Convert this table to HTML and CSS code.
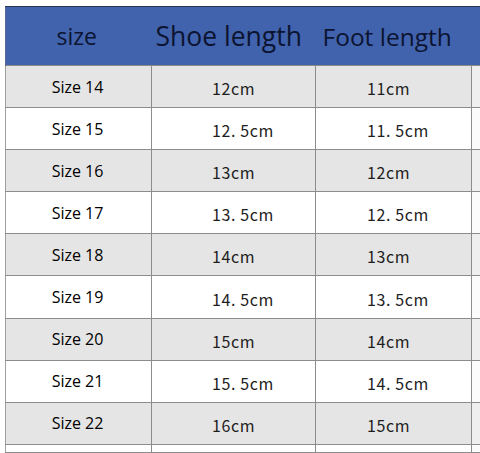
FILE: index.html
```html
<!DOCTYPE html>
<html>
<head>
<meta charset="utf-8">
<link rel="stylesheet" href="styles.css">
</head>
<body>
<div class="wrap">
<table class="chart">
  <colgroup>
    <col class="c1"><col class="c2"><col class="c3"><col class="c4">
  </colgroup>
  <thead>
    <tr class="head">
      <th class="h-size">size</th>
      <th class="h-shoe">Shoe length</th>
      <th class="h-foot">Foot length</th>
      <th class="h-extra"></th>
    </tr>
  </thead>
  <tbody>
    <tr class="gray"><td class="sz">Size 14</td><td class="cm cm2">12cm</td><td class="cm cm3">11cm</td><td class="ex"></td></tr>
    <tr class="white"><td class="sz">Size 15</td><td class="cm cm2">12. 5cm</td><td class="cm cm3">11. 5cm</td><td class="ex"></td></tr>
    <tr class="gray"><td class="sz">Size 16</td><td class="cm cm2">13cm</td><td class="cm cm3">12cm</td><td class="ex"></td></tr>
    <tr class="white"><td class="sz">Size 17</td><td class="cm cm2">13. 5cm</td><td class="cm cm3">12. 5cm</td><td class="ex"></td></tr>
    <tr class="gray"><td class="sz">Size 18</td><td class="cm cm2">14cm</td><td class="cm cm3">13cm</td><td class="ex"></td></tr>
    <tr class="white"><td class="sz">Size 19</td><td class="cm cm2">14. 5cm</td><td class="cm cm3">13. 5cm</td><td class="ex"></td></tr>
    <tr class="gray"><td class="sz">Size 20</td><td class="cm cm2">15cm</td><td class="cm cm3">14cm</td><td class="ex"></td></tr>
    <tr class="white"><td class="sz">Size 21</td><td class="cm cm2">15. 5cm</td><td class="cm cm3">14. 5cm</td><td class="ex"></td></tr>
    <tr class="gray"><td class="sz">Size 22</td><td class="cm cm2">16cm</td><td class="cm cm3">15cm</td><td class="ex"></td></tr>
    <tr class="white last"><td class="sz"></td><td class="cm cm2"></td><td class="cm cm3"></td><td class="ex"></td></tr>
  </tbody>
</table>
</div>
</body>
</html>
```

FILE: styles.css
```css
html, body {
  margin: 0;
  padding: 0;
  background: #ffffff;
}

.wrap {
  box-sizing: border-box;
  padding: 6px 0 0 5px;
  width: 480px;
  height: 453px;
  overflow: hidden;
}

.chart {
  border-collapse: collapse;
  table-layout: fixed;
  width: 486px;
  font-family: "Open Sans", "Noto Sans", sans-serif;
  color: #000000;
}

.c1 { width: 146px; }
.c2 { width: 164px; }
.c3 { width: 156px; }
.c4 { width: 20px; }

.head {
  background: #4163ad;
  height: 59px;
}

.head th {
  font-weight: 400;
  color: #0c1431;
  border-top: 1px solid #2a3450;
  padding: 0;
  vertical-align: middle;
  white-space: nowrap;
}

.head th:first-child {
  border-left: 1px solid #5a6a90;
}

.h-size {
  font-size: 23px;
  text-align: center;
  padding-right: 4px !important;
}

.h-shoe {
  font-size: 26.5px;
  text-align: left;
  padding-left: 4px !important;
}

.h-foot {
  font-size: 24.5px;
  text-align: left;
  padding-left: 7px !important;
}

tbody tr {
  height: 42.1px;
}

tbody tr.last {
  height: 8px;
}

tbody td {
  border: 1px solid #8c8c8c;
  border-top: 1.5px solid #8c8c8c;
  padding: 0;
  vertical-align: middle;
  white-space: nowrap;
}

tbody td:first-child {
  border-left: 1px solid #a0a0a0;
}

.gray td { background: #e5e5e5; }
.white td { background: #ffffff; }

.gray td.ex { background: #efefef; }
.white td.ex { background: #fbfbfb; }

.sz {
  font-size: 16px;
  text-align: center;
  padding-right: 2px !important;
}

.cm {
  font-family: "Noto Sans CJK SC", "Noto Sans", sans-serif;
  font-size: 16px;
  letter-spacing: 0.6px;
  color: #1e1e1e;
  text-align: left;
  padding-top: 3px !important;
}

.cm2 { padding-left: 60px !important; }
.cm3 { padding-left: 51px !important; }
```
